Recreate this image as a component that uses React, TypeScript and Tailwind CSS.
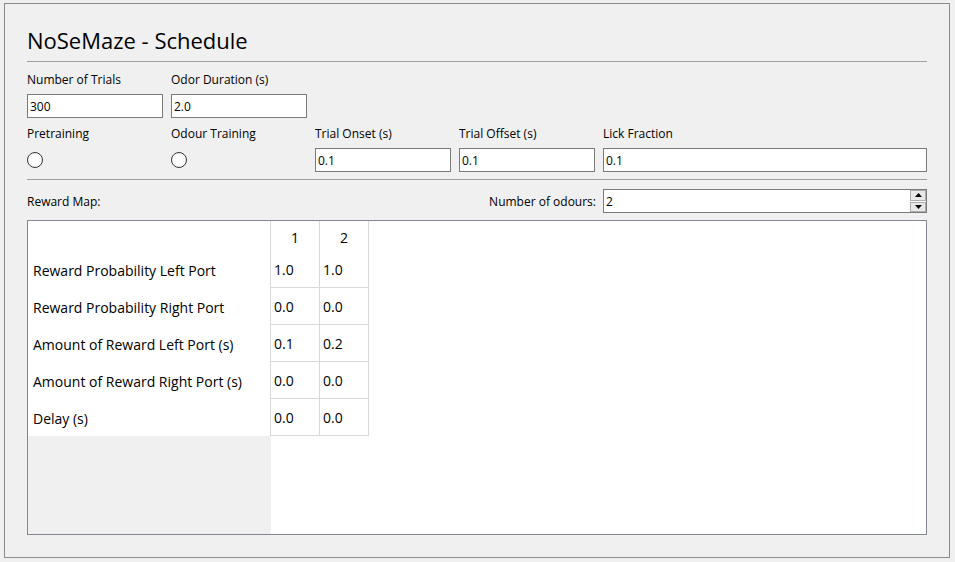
import React from "react";

const rows = [
  { label: "Reward Probability Left Port", values: ["1.0", "1.0"] },
  { label: "Reward Probability Right Port", values: ["0.0", "0.0"] },
  { label: "Amount of Reward Left Port (s)", values: ["0.1", "0.2"] },
  { label: "Amount of Reward Right Port (s)", values: ["0.0", "0.0"] },
  { label: "Delay (s)", values: ["0.0", "0.0"] },
];

function Field({ value, className = "" }: { value: string; className?: string }) {
  return (
    <div
      className={`h-[24px] border border-[#7a7a7a] bg-white flex items-center pl-[2px] pt-[1px] text-[12px] text-black ${className}`}
    >
      {value}
    </div>
  );
}

function Radio() {
  return (
    <div className="h-[24px] flex items-center">
      <div className="w-[16px] h-[16px] rounded-full border border-[#333333] bg-white" />
    </div>
  );
}

function Label({ children }: { children: React.ReactNode }) {
  return <div className="h-[18px] flex items-center pt-[2px] text-[12px] text-black">{children}</div>;
}

export default function App() {
  return (
    <div
      className="w-[955px] h-[562px] bg-[#f0f0f0] pt-[3px] pl-[4px] overflow-hidden"
      style={{ fontFamily: '"Segoe UI", "Open Sans", sans-serif' }}
    >
      <div className="w-[946px] h-[555px] border border-[#8a8a8a] px-[22px] flex flex-col">
        {/* title */}
        <div className="mt-[20px] h-[32px] flex items-center text-[22px] text-black">
          NoSeMaze - Schedule
        </div>
        <div className="mt-[5px] h-px w-[900px] bg-[#a0a0a0]" />

        {/* first row */}
        <div className="mt-[8px] grid grid-cols-[136px_136px] gap-x-[8px]">
          <Label>Number of Trials</Label>
          <Label>Odor Duration (s)</Label>
        </div>
        <div className="mt-[6px] grid grid-cols-[136px_136px] gap-x-[8px]">
          <Field value="300" />
          <Field value="2.0" />
        </div>

        {/* second row */}
        <div className="mt-[6px] grid grid-cols-[136px_136px_136px_136px_324px] gap-x-[8px]">
          <Label>Pretraining</Label>
          <Label>Odour Training</Label>
          <Label>Trial Onset (s)</Label>
          <Label>Trial Offset (s)</Label>
          <Label>Lick Fraction</Label>
        </div>
        <div className="mt-[6px] grid grid-cols-[136px_136px_136px_136px_324px] gap-x-[8px]">
          <Radio />
          <Radio />
          <Field value="0.1" />
          <Field value="0.1" />
          <Field value="0.1" />
        </div>
        <div className="mt-[7px] h-px w-[900px] bg-[#a0a0a0]" />

        {/* reward map header */}
        <div className="mt-[9px] h-[24px] w-[900px] flex items-center text-[12px] text-black">
          <span className="flex-1 pt-[2px]">Reward Map:</span>
          <span className="mr-[7px] pt-[2px]">Number of odours:</span>
          <div className="w-[324px] h-[24px] border border-[#7a7a7a] bg-white flex items-center pl-[2px]">
            <span className="flex-1 pt-[1px]">2</span>
            <div className="w-[16px] h-[22px] flex flex-col gap-[1px]">
              <div className="flex-1 bg-[#e8e8e8] border border-[#adadad] flex items-center justify-center">
                <svg width="7" height="4" viewBox="0 0 7 4">
                  <path d="M0 4 L3.5 0 L7 4 Z" fill="#000" />
                </svg>
              </div>
              <div className="flex-1 bg-[#e8e8e8] border border-[#adadad] flex items-center justify-center">
                <svg width="7" height="4" viewBox="0 0 7 4">
                  <path d="M0 0 L7 0 L3.5 4 Z" fill="#000" />
                </svg>
              </div>
            </div>
          </div>
        </div>

        {/* table */}
        <div className="mt-[7px] w-[900px] h-[315px] border border-[#828790] bg-white flex text-[14px] text-black">
          <div className="w-[242px] flex flex-col">
            <div className="h-[30px] bg-white" />
            {rows.map((r) => (
              <div key={r.label} className="h-[37px] bg-white flex items-center pl-[5px] pt-[2px]">
                {r.label}
              </div>
            ))}
            <div className="flex-1 bg-[#f0f0f0] w-[243px]" />
          </div>
          <div className="flex flex-col">
            <div className="h-[30px] flex">
              {["1", "2"].map((h, i) => (
                <div
                  key={h}
                  className={`w-[49px] border-l border-[#d9d9d9] flex items-center justify-center pt-[2px] ${
                    i === 1 ? "w-[50px] border-r" : ""
                  }`}
                >
                  {h}
                </div>
              ))}
            </div>
            {rows.map((r) => (
              <div key={r.label} className="h-[37px] flex">
                {r.values.map((v, i) => (
                  <div
                    key={i}
                    className={`w-[49px] border-l border-b border-[#d9d9d9] flex items-center pl-[3px] pt-[1px] ${
                      i === 1 ? "w-[50px] border-r" : ""
                    }`}
                  >
                    {v}
                  </div>
                ))}
              </div>
            ))}
          </div>
        </div>
      </div>
    </div>
  );
}
